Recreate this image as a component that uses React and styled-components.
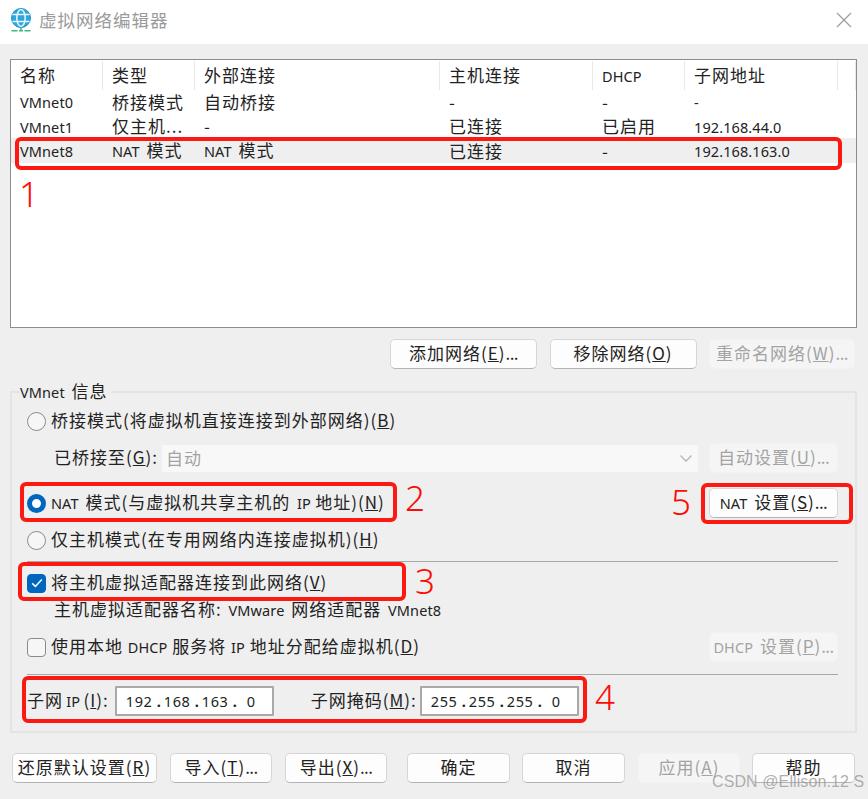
import React from "react"
import styled, { createGlobalStyle } from "styled-components"

const GlobalStyle = createGlobalStyle`
  html, body {
    margin: 0;
    padding: 0;
    background: #efefef;
  }
`

const cjk = `"Noto Sans CJK SC", "Noto Sans", sans-serif`

const Window = styled.div`
  position: relative;
  width: 868px;
  height: 799px;
  overflow: hidden;
  background: #efefef;
  color: #222;
  font-family: ${cjk};
  font-size: 17px;
  letter-spacing: 1px;
  word-spacing: 2px;
  line-height: 24px;
`

const TitleBar = styled.header`
  height: 44px;
  background: #fff;
  display: flex;
  align-items: center;
  padding: 0 16px 4px 10px;
  gap: 7px;
  box-sizing: border-box;
`

const Title = styled.div`
  flex: 1;
  color: #9a9a9a;
  font-size: 17.5px;
  letter-spacing: 1px;
`

const Body = styled.main`
  padding: 15px 11px 0 10px;
`

const Latin = styled.span`
  font-family: "Noto Sans", sans-serif;
  font-size: 14.5px;
  letter-spacing: 0.1px;
`

const Trail = styled.span`
  letter-spacing: -0.6px;
`

const Tight = styled.span`
  word-spacing: ${(p) => p.$s ?? 0}px;
`

const ListBox = styled.section`
  height: 269px;
  background: #fff;
  border: 1px solid #8c8c8c;
  box-sizing: border-box;
`

const Grid = styled.div`
  display: grid;
  grid-template-columns: 92px 92px 245px 153px 92px 153px 1fr;
`

const HeaderRow = styled(Grid)`
  height: 29px;
  align-items: stretch;
`

const HeaderCell = styled.div`
  padding-left: 9px;
  border-right: 1px solid #e8e8e8;
  margin-top: 1px;
  line-height: 27px;
  white-space: nowrap;
`

const DataRow = styled(Grid)`
  height: 24.5px;
  align-items: center;
  background: ${(p) => (p.$selected ? "#efefef" : "transparent")};
`

const DataCell = styled.div`
  padding-left: 9px;
  white-space: nowrap;
`

const ActionRow = styled.div`
  display: flex;
  justify-content: flex-end;
  gap: 12.5px;
  margin-top: 11px;
  padding-right: 2px;
`

const Button = styled.button`
  width: ${(p) => p.$w || 129}px;
  height: 30px;
  box-sizing: border-box;
  flex: none;
  padding: 0 0 2px;
  font: inherit;
  letter-spacing: 1px;
  word-spacing: 2px;
  white-space: nowrap;
  border-radius: 5px;
  color: ${(p) => (p.disabled ? "#a3a3a3" : "#222")};
  background: ${(p) => (p.disabled ? "#f5f5f5" : "#fdfdfd")};
  border: 1px solid ${(p) => (p.disabled ? "#f2f2f2" : "#d6d6d6")};
  border-bottom-color: ${(p) => (p.disabled ? "#f2f2f2" : "#b4b4b4")};
`

const Group = styled.fieldset`
  margin: 10px 0 0;
  padding: 0 17px 0 15px;
  height: 354px;
  box-sizing: border-box;
  border: 2px solid #e4e4e4;
  min-width: 0;
`

const Legend = styled.legend`
  margin-left: -7px;
  padding: 0 3px 0 0;
  line-height: 24px;
  color: #222;
`

const Row = styled.div`
  display: flex;
  align-items: center;
  height: ${(p) => p.$h || 30}px;
  margin-top: ${(p) => p.$mt || 0}px;
  white-space: nowrap;
`

const Label = styled.span`
  position: relative;
  top: -1px;
`

const Spacer = styled.div`
  flex: 1;
`

const Indented = styled(Label)`
  padding-left: 27px;
`

const Divider = styled.hr`
  margin: ${(p) => p.$mt}px 0 0;
  height: 1px;
  border: 0;
  background: #a8a8a8;
`

const RadioMark = styled.span`
  flex: none;
  width: 19px;
  height: 19px;
  box-sizing: border-box;
  border-radius: 50%;
  margin-right: 5px;
  background: ${(p) => (p.$on ? "#fff" : "#f6f6f6")};
  border: ${(p) => (p.$on ? "5.5px solid #0067c0" : "1.5px solid #8a8a8a")};
`

const CheckMark = styled.span`
  flex: none;
  width: 19px;
  height: 19px;
  box-sizing: border-box;
  border-radius: 4px;
  margin-right: 5px;
  display: flex;
  align-items: center;
  justify-content: center;
  background: ${(p) => (p.$on ? "#0067c0" : "#f6f6f6")};
  border: 1.5px solid ${(p) => (p.$on ? "#0067c0" : "#8a8a8a")};
`

const Select = styled.div`
  width: 536px;
  height: 27px;
  margin-left: 4px;
  padding: 0 5px 0 4px;
  box-sizing: border-box;
  display: flex;
  align-items: center;
  justify-content: space-between;
  background: #f8f8f8;
  color: #a3a3a3;
`

const IpField = styled.div`
  width: 159px;
  height: 30px;
  flex: none;
  box-sizing: border-box;
  display: flex;
  align-items: center;
  padding-left: 9px;
  background: #fff;
  border: 2px solid #a9a9a9;
  border-radius: 1px;
`

const Octet = styled.span`
  width: ${(p) => (p.$short ? 14 : 31)}px;
  font-family: "Noto Sans", sans-serif;
  font-size: 14.5px;
  letter-spacing: 0.6px;
`

const Dot = styled.span`
  width: 7px;
  font-family: "Noto Sans", sans-serif;
  font-size: 14.5px;
  font-weight: 700;
`

const Gap = styled.span`
  width: ${(p) => p.$w}px;
  flex: none;
`

const Footer = styled.footer`
  display: flex;
  margin-top: 20px;
  padding-left: 2px;
`

const Callout = styled.div`
  position: absolute;
  left: ${(p) => p.$x}px;
  top: ${(p) => p.$y}px;
  width: ${(p) => p.$w}px;
  height: ${(p) => p.$h}px;
  box-sizing: border-box;
  border: 4px solid #fb1a12;
  border-radius: 6px;
`

const Numeral = styled.div`
  position: absolute;
  left: ${(p) => p.$x}px;
  top: ${(p) => p.$y}px;
  color: #fb0d05;
  font-family: "Noto Sans", sans-serif;
  font-weight: 300;
  font-size: 35px;
  line-height: 40px;
  letter-spacing: 0;
`

const Watermark = styled.div`
  position: absolute;
  left: 712px;
  top: 772px;
  color: rgba(150, 150, 150, 0.75);
  font-family: "Liberation Sans", sans-serif;
  font-size: 16px;
  line-height: 20px;
  letter-spacing: 0.1px;
  word-spacing: 0;
  white-space: nowrap;
`

const Chevron = () => (
  <svg width="14" height="10" viewBox="0 0 14 10" fill="none">
    <path d="M1.5 2.5 7 8l5.5-5.5" stroke="#b5b5b5" strokeWidth="1.3" />
  </svg>
)

const GlobeIcon = () => (
  <svg width="22" height="24" viewBox="0 0 22 24" fill="none">
    <circle cx="11" cy="10" r="9.5" fill="#2fa6dc" />
    <circle cx="11" cy="10" r="9.5" stroke="#1f8fc4" />
    <ellipse cx="11" cy="10" rx="4.2" ry="8.4" stroke="#e9f7fd" strokeWidth="1.5" />
    <path d="M2.4 6.6h17.2M2.4 13.4h17.2" stroke="#e9f7fd" strokeWidth="1.5" />
    <path d="M11 19.5v2.5" stroke="#4caf8e" strokeWidth="1.6" />
    <path d="M1.5 22.7h6M9 22.7h4M14.5 22.7h6" stroke="#3fb58a" strokeWidth="1.6" />
  </svg>
)

const CloseIcon = () => (
  <svg width="16" height="16" viewBox="0 0 16 16" fill="none">
    <path d="M1 1l14 14M15 1 1 15" stroke="#9c9c9c" strokeWidth="1.2" />
  </svg>
)

const TickIcon = () => (
  <svg width="12" height="10" viewBox="0 0 12 10" fill="none">
    <path d="M1.2 5.4 4.4 8.4 10.8 1.6" stroke="#fff" strokeWidth="1.5" />
  </svg>
)

const Ip = ({ parts }) => (
  <IpField>
    {parts.map((part, i) => (
      <React.Fragment key={i}>
        <Octet $short={part.length === 1}>{part}</Octet>
        {i < 2 && <Dot>.</Dot>}
        {i === 2 && (
          <>
            <Dot>.</Dot>
            <Gap $w={7} />
          </>
        )}
      </React.Fragment>
    ))}
  </IpField>
)

const networks = [
  { name: "VMnet0", type: "桥接模式", ext: "自动桥接", host: "-", dhcp: "-", subnet: "-" },
  { name: "VMnet1", type: "仅主机...", ext: "-", host: "已连接", dhcp: "已启用", subnet: "192.168.44.0" },
  { name: "VMnet8", type: <><Latin>NAT</Latin> 模式</>, ext: <><Latin>NAT</Latin> 模式</>, host: "已连接", dhcp: "-", subnet: "192.168.163.0", selected: true },
]

const App = () => {
  return (
    <Window>
      <GlobalStyle />
      <TitleBar>
        <GlobeIcon />
        <Title>虚拟网络编辑器</Title>
        <CloseIcon />
      </TitleBar>
      <Body>
        <ListBox>
          <HeaderRow>
            <HeaderCell>名称</HeaderCell>
            <HeaderCell>类型</HeaderCell>
            <HeaderCell>外部连接</HeaderCell>
            <HeaderCell>主机连接</HeaderCell>
            <HeaderCell><Latin>DHCP</Latin></HeaderCell>
            <HeaderCell>子网地址</HeaderCell>
            <HeaderCell />
          </HeaderRow>
          {networks.map((n) => (
            <DataRow key={n.name} $selected={n.selected}>
              <DataCell><Latin>{n.name}</Latin></DataCell>
              <DataCell>{n.type}</DataCell>
              <DataCell>{n.ext}</DataCell>
              <DataCell>{n.host}</DataCell>
              <DataCell>{n.dhcp}</DataCell>
              <DataCell><Latin>{n.subnet}</Latin></DataCell>
              <DataCell />
            </DataRow>
          ))}
        </ListBox>

        <ActionRow>
          <Button $w={147}>添加网络(<u>E</u>)<Trail>...</Trail></Button>
          <Button $w={147}>移除网络(<u>O</u>)</Button>
          <Button $w={146} disabled>重命名网络(<u>W</u>)<Trail>...</Trail></Button>
        </ActionRow>

        <Group>
          <Legend><Latin>VMnet</Latin> 信息</Legend>
          <Row $mt={2}>
            <RadioMark />
            <Label>桥接模式(将虚拟机直接连接到外部网络)(<u>B</u>)</Label>
          </Row>
          <Row $mt={7}>
            <Indented>已桥接至(<u>G</u>):</Indented>
            <Select>
              自动
              <Chevron />
            </Select>
            <Spacer />
            <Button disabled>自动设置(<u>U</u>)<Trail>...</Trail></Button>
          </Row>
          <Row $mt={15}>
            <RadioMark $on />
            <Label>
              <Latin>NAT</Latin> 模式(与虚拟机共享主机的 <Tight $s={-0.5}><Latin>IP</Latin> 地址</Tight>)(<u>N</u>)
            </Label>
            <Spacer />
            <Button><Latin>NAT</Latin> 设置(<u>S</u>)<Trail>...</Trail></Button>
          </Row>
          <Row $mt={7}>
            <RadioMark />
            <Label>仅主机模式(在专用网络内连接虚拟机)(<u>H</u>)</Label>
          </Row>
          <Divider $mt={6} />
          <Row $mt={6}>
            <CheckMark $on><TickIcon /></CheckMark>
            <Label>将主机虚拟适配器连接到此网络(<u>V</u>)</Label>
          </Row>
          <Row $h={24}>
            <Indented>
              主机虚拟适配器名称: <Latin>VMware</Latin> 网络适配器 <Latin>VMnet8</Latin>
            </Indented>
          </Row>
          <Row $mt={10}>
            <CheckMark />
            <Label>
              <Tight>使用本地 <Latin>DHCP</Latin> 服务将 <Latin>IP</Latin> 地址分配给虚拟机(<u>D</u>)</Tight>
            </Label>
            <Spacer />
            <Button disabled><Latin>DHCP</Latin> 设置(<u>P</u>)<Trail>...</Trail></Button>
          </Row>
          <Divider $mt={12} />
          <Row $mt={11}>
            <Label><Tight $s={-1.5}>子网 <Latin>IP</Latin> (<u>I</u>):</Tight></Label>
            <Gap $w={6} />
            <Ip parts={["192", "168", "163", "0"]} />
            <Gap $w={37} />
            <Label>子网掩码(<u>M</u>):</Label>
            <Gap $w={3} />
            <Ip parts={["255", "255", "255", "0"]} />
          </Row>
        </Group>

        <Footer>
          <Button $w={145}>还原默认设置(<u>R</u>)</Button>
          <Gap $w={13} />
          <Button $w={102}>导入(<u>T</u>)<Trail>...</Trail></Button>
          <Gap $w={13} />
          <Button $w={102}>导出(<u>X</u>)<Trail>...</Trail></Button>
          <Gap $w={20} />
          <Button $w={103}>确定</Button>
          <Gap $w={12} />
          <Button $w={103}>取消</Button>
          <Gap $w={13} />
          <Button $w={102} disabled>应用(<u>A</u>)</Button>
          <Gap $w={12} />
          <Button $w={103}>帮助</Button>
        </Footer>
      </Body>

      <Callout $x={15} $y={137} $w={827} $h={33} />
      <Callout $x={20} $y={482} $w={377} $h={40} />
      <Callout $x={18} $y={562} $w={388} $h={39} />
      <Callout $x={22} $y={676} $w={565} $h={47} />
      <Callout $x={701} $y={483} $w={152} $h={41} />
      <Numeral $x={19} $y={174}>1</Numeral>
      <Numeral $x={405} $y={478}>2</Numeral>
      <Numeral $x={415} $y={561}>3</Numeral>
      <Numeral $x={595} $y={677}>4</Numeral>
      <Numeral $x={671} $y={482}>5</Numeral>
      <Watermark>CSDN @Ellison.12 S</Watermark>
    </Window>
  )
}

export default App
